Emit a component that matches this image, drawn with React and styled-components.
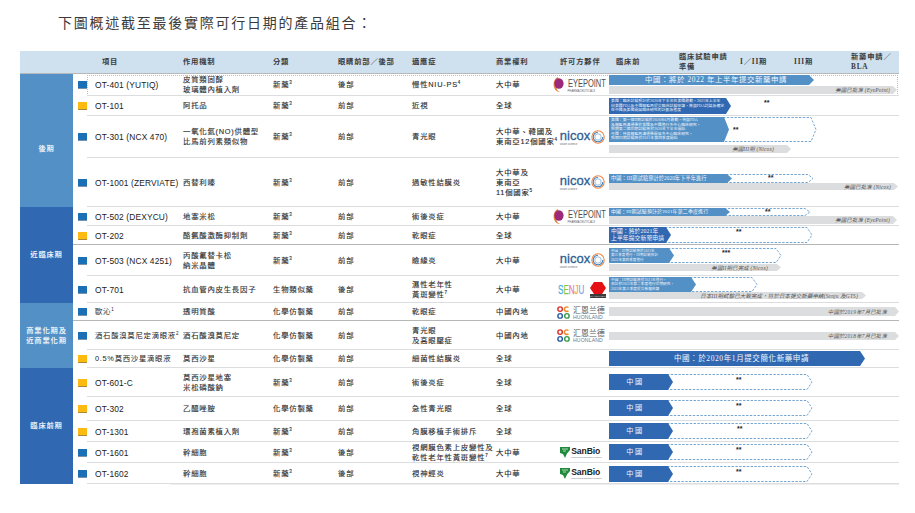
import React from "react";
import styled, { createGlobalStyle } from "styled-components";

const MID = "#5390c6";
const DARK = "#3068b2";
const GRAY = "#dcddde";
const COLS = "22px 88px 90px 65px 74px 84px 57px 56px 290px";
const COLON = "\uFF1A";
const COMMA = "\uFF0C";
const SLASH = "\uFF0F";

const Global = createGlobalStyle`
  html, body { margin: 0; padding: 0; background: #fff; }
  body { font-family: "Liberation Sans", "Noto Sans CJK TC", sans-serif; color: #333; }
`;

const Page = styled.div`
  width: 915px;
  height: 513px;
  overflow: hidden;
  padding: 12px 0 0 20px;
  box-sizing: border-box;
`;
const Title = styled.h1`
  margin: 0 0 0 38px;
  height: 39px;
  font-family: "Noto Sans CJK TC", sans-serif;
  font-size: 14px;
  line-height: 21px;
  font-weight: 400;
  letter-spacing: 1.75px;
  color: #3a3a3a;
`;
const Table = styled.div`
  width: 879px;
`;
const Header = styled.div`
  height: 23px;
  box-sizing: border-box;
  display: grid;
  grid-template-columns: 53px ${COLS};
  align-items: center;
  background: #cfe0ef;
  border-bottom: 1px solid #b6b8ba;
  font-family: "Liberation Serif", "Noto Sans CJK TC", serif;
  font-size: 7.3px;
  font-weight: 700;
  letter-spacing: 0.8px;
  line-height: 10px;
  color: #3b3b3b;
`;
const HeadCell = styled.div`
  padding-left: ${({ $pl }) => $pl || 0}px;
  white-space: pre;
`;
const Stages = styled.div`
  display: grid;
  grid-template-columns: 70px 61px 54px 57px 48px;
  align-items: center;
`;
const Group = styled.section`
  display: flex;
`;
const GroupLabel = styled.div`
  flex: 0 0 53px;
  display: flex;
  align-items: center;
  justify-content: center;
  padding-top: ${({ $shift }) => $shift || 0}px;
  box-sizing: border-box;
  background: ${({ $color }) => $color};
  color: #e8f0f8;
  font-size: 7.3px;
  font-weight: 700;
  letter-spacing: 0.8px;
  line-height: 10px;
  text-align: center;
  white-space: pre-line;
`;
const Rows = styled.div`
  flex: 1;
`;
const Row = styled.div`
  position: relative;
  height: ${({ $h }) => $h}px;
  display: grid;
  grid-template-columns: ${COLS};
  align-items: center;
  font-size: 7.4px;
  letter-spacing: 0.75px;
  line-height: 10px;
  &::after {
    content: "";
    position: absolute;
    left: ${({ $strong }) => ($strong ? 0 : 14)}px;
    right: 0;
    bottom: 0;
    height: 1px;
    background: ${({ $strong }) => ($strong ? "#b4b6b8" : "#dcdddf")};
  }
  ${({ $dotted }) =>
    $dotted &&
    `&::before {
      content: "";
      position: absolute;
      left: 14px;
      right: 1px;
      top: 1px;
      bottom: 0;
      border: 1px dotted #e9a6ae;
      z-index: 0;
    }`}
`;
const Marker = styled.span`
  width: 9px;
  height: 7px;
  margin-left: 5px;
  background: ${({ $yellow }) => ($yellow ? "#fdbb12" : "#1a6fb5")};
  border-bottom: 1px solid ${({ $yellow }) => ($yellow ? "#a88a3a" : "#7a93ad")};
`;
const Project = styled.div`
  font-size: ${({ $cjk }) => ($cjk ? 7.4 : 8.4)}px;
  letter-spacing: ${({ $cjk }) => ($cjk ? 0.7 : 0.15)}px;
  color: #222;
  white-space: nowrap;
`;
const Cell = styled.div`
  white-space: pre;
  color: #2c2c2c;
  -webkit-text-stroke: 0.12px #2c2c2c;
`;
const Rights = styled(Cell)`
  color: #1c1c1c;
`;
const Sup = styled.sup`
  font-size: 4.5px;
  line-height: 0;
  letter-spacing: 0;
`;
const LogoCell = styled.div`
  display: flex;
  justify-content: center;
  align-items: center;
  letter-spacing: 0;
`;
const Pipeline = styled.div`
  position: relative;
  z-index: 1;
  align-self: stretch;
  display: flex;
  flex-direction: column;
  padding-top: ${({ $top }) => $top}px;
  box-sizing: border-box;
`;
const Track = styled.div`
  position: relative;
  display: flex;
`;
const Bar = styled.div`
  position: relative;
  z-index: 1;
  flex: none;
  width: ${({ $w }) => $w}px;
  height: ${({ $h }) => $h}px;
  display: flex;
  align-items: center;
  justify-content: ${({ $center }) => ($center ? "center" : "flex-start")};
  padding: 0 ${({ $pr }) => $pr ?? 5}px 0 ${({ $pl }) => $pl ?? 2}px;
  box-sizing: border-box;
  overflow: hidden;
  background: ${({ $color }) => $color};
  clip-path: polygon(0 0, calc(100% - 5px) 0, 100% 50%, calc(100% - 5px) 100%, 0 100%);
  font-family: "Liberation Serif", "Noto Sans CJK TC", serif;
  color: #f2f6fb;
  font-size: ${({ $size }) => $size}px;
  line-height: ${({ $size }) => $size * 1.22}px;
  letter-spacing: ${({ $ls }) => $ls ?? 0.1}px;
  white-space: pre;
`;
const Tail = styled.div`
  position: relative;
  margin-left: -6px;
  flex: none;
  width: ${({ $w }) => $w}px;
  height: ${({ $h }) => $h}px;
`;
const Stars = styled.span`
  position: absolute;
  top: ${({ $y }) => $y || 0}px;
  left: ${({ $x }) => $x}px;
  font-size: 7px;
  line-height: 7px;
  font-weight: 700;
  letter-spacing: 0;
  color: #222;
`;
const Approved = styled.div`
  width: ${({ $w }) => $w}px;
  height: ${({ $h }) => $h}px;
  margin-top: ${({ $gap }) => $gap || 0}px;
  display: flex;
  align-items: center;
  justify-content: flex-end;
  padding-right: ${({ $pr }) => $pr}px;
  box-sizing: border-box;
  background: ${GRAY};
  clip-path: polygon(0 0, calc(100% - 4px) 0, 100% 50%, calc(100% - 4px) 100%, 0 100%);
  font-family: "Liberation Serif", "Noto Sans CJK TC", serif;
  font-style: italic;
  font-size: 5.4px;
  letter-spacing: 0.2px;
  color: #555;
  white-space: nowrap;
`;
const TableEnd = styled.div`
  margin: 0 0 0 150px;
  width: 729px;
  height: 1px;
  background: #eeeeee;
`;

const LogoBox = styled.div`
  display: flex;
  align-items: center;
  gap: ${({ $gap }) => $gap || 0}px;
  margin-left: ${({ $ml }) => $ml || 0}px;
`;
const Stack = styled.div`
  display: flex;
  flex-direction: column;
`;
const EyeWord = styled.span`
  display: block;
  width: 42px;
  font-size: 11px;
  line-height: 13px;
  color: #4b4f54;
  white-space: nowrap;
  transform: scaleX(0.68);
  transform-origin: left center;
`;
const Tiny = styled.span`
  font-size: ${({ $size }) => $size || 3}px;
  line-height: ${({ $size }) => ($size || 3) + 1}px;
  color: #666;
  white-space: nowrap;
  letter-spacing: 0;
`;
const NicoxWord = styled.span`
  font-size: 13px;
  line-height: 15px;
  color: #2c5d92;
  -webkit-text-stroke: 0.3px #2c5d92;
`;
const SenjuWord = styled.span`
  display: block;
  width: 27px;
  font-size: 13px;
  line-height: 15px;
  white-space: nowrap;
  transform: scaleX(0.62);
  transform-origin: left center;
  -webkit-text-stroke: 0.25px currentColor;
`;
const Letter = styled.span`
  color: ${({ $c }) => $c};
`;
const HuonCn = styled.span`
  font-family: "Noto Sans CJK SC", sans-serif;
  font-size: 7.8px;
  line-height: 9px;
  color: #555;
  letter-spacing: 0.2px;
  white-space: nowrap;
`;
const HuonEn = styled.span`
  font-size: 5.2px;
  line-height: 6px;
  color: #777;
  letter-spacing: 0.1px;
`;
const SanWord = styled.span`
  font-size: 8.6px;
  line-height: 9px;
  font-weight: 700;
  color: #222;
  letter-spacing: -0.1px;
`;
const SenjuTag = styled.span`
  width: 16px;
  height: 4px;
  background: #3b3b3b;
  color: #ddd;
  font-size: 2px;
  line-height: 4px;
  text-align: center;
  white-space: nowrap;
  overflow: hidden;
`;

const EyePoint = () => (
  <LogoBox $gap={4}>
    <svg width="11" height="15" viewBox="0 0 11 15">
      <path d="M5 0C1 2 0 6 1 10s4 5 6 5c-3-1-4-3-3-6S6 3 5 0Z" fill="#e2803a" />
      <ellipse cx="6" cy="6.5" rx="4.6" ry="5.2" fill="#9c2a7c" />
    </svg>
    <Stack>
      <EyeWord>EYEPOINT</EyeWord>
      <Tiny $size={2.8}>PHARMACEUTICALS</Tiny>
    </Stack>
  </LogoBox>
);

const Nicox = () => (
  <LogoBox $gap={1} $ml={3}>
    <Stack>
      <NicoxWord>nicox</NicoxWord>
      <Tiny $size={2.8}>vision science</Tiny>
    </Stack>
    <svg width="14" height="14" viewBox="0 0 14 14" fill="none">
      <circle cx="7" cy="7" r="6.2" stroke="#ee8748" strokeWidth="1.1" />
      <path d="M7 2.2a4.8 4.8 0 1 0 4.8 4.8" stroke="#3f7fb8" strokeWidth="1.1" />
      <circle cx="7" cy="7" r="3.2" stroke="#8fb3d6" strokeWidth="0.9" />
    </svg>
  </LogoBox>
);

const Senju = () => (
  <LogoBox $gap={5} $ml={2}>
    <SenjuWord>
      <Letter $c="#3fb0df">S</Letter>
      <Letter $c="#8cc63f">E</Letter>
      <Letter $c="#ea78ae">N</Letter>
      <Letter $c="#f3a93c">J</Letter>
      <Letter $c="#7f9fe0">U</Letter>
    </SenjuWord>
    <Stack>
      <svg width="16" height="12" viewBox="0 0 16 12">
        <polygon points="4,0 12,0 16,6 12,12 4,12 0,6" fill="#e60f14" />
      </svg>
      <SenjuTag>DIV YOSHI SEIKI</SenjuTag>
    </Stack>
  </LogoBox>
);

const Huonland = () => (
  <LogoBox $gap={3}>
    <svg width="13" height="13" viewBox="0 0 15 15" fill="none" strokeWidth="1.7">
      <circle cx="3.6" cy="3.6" r="2.6" stroke="#d8342b" />
      <path d="M13.2 1.8a2.7 2.7 0 1 0 0 3.8" stroke="#ee8a25" />
      <circle cx="3.6" cy="11.4" r="2.6" stroke="#2a5da8" />
      <circle cx="11.4" cy="11.4" r="2.6" stroke="#3a9a4a" />
    </svg>
    <Stack>
      <HuonCn>汇恩兰德</HuonCn>
      <HuonEn>HUONLAND</HuonEn>
    </Stack>
  </LogoBox>
);

const SanBio = () => (
  <LogoBox $gap={1}>
    <svg width="10" height="11" viewBox="0 0 10 11">
      <polygon points="0,0 10,0 10,3 7,6.5 5,11 3,7 0,6" fill="#1f8a3c" />
      <path d="M2 2h6M3 4h3" stroke="#d8efd8" strokeWidth="0.8" />
    </svg>
    <Stack>
      <SanWord>SanBio</SanWord>
      <Tiny $size={2}>Pioneering Regenerative Medicine</Tiny>
    </Stack>
  </LogoBox>
);

const logos = { eye: EyePoint, nicox: Nicox, senju: Senju, huon: Huonland, san: SanBio };

const DashedTail = ({ w, h, stars, starsX, starsY }) => (
  <Tail $w={w} $h={h}>
    <svg width={w} height={h} viewBox={`0 0 ${w} ${h}`} fill="none">
      <path
        d={`M0 .5H${w - 6}L${w - 1} ${h / 2}L${w - 6} ${h - 0.5}H0`}
        stroke={MID}
        strokeWidth="0.8"
        strokeDasharray="2.4 1.4"
      />
    </svg>
    {stars && (
      <Stars $x={starsX} $y={starsY}>
        {stars}
      </Stars>
    )}
  </Tail>
);

const ROWS_DATA = [
  {
    label: "後期", color: MID, shift: 16,
    rows: [
      { h: 22, dotted: true, name: "OT-401 (YUTIQ)", mech: "皮質類固醇\n玻璃體內植入劑", kind: "新藥", pos: "後部", ind: <>慢性NIU-PS<Sup>4</Sup></>, rights: "大中華", logo: "eye", top: 1,
        bar: { w: 205, h: 10, color: MID, size: 7.4, ls: 0.6, center: true, pl: 14, text: `中國${COLON}將於 2022 年上半年提交新藥申請` },
        approved: { w: 288, h: 8, gap: 1, pr: 7, text: "美國已批准 (EyePoint)" } },
      { h: 20, yellow: true, name: "OT-101", mech: "阿托品", kind: "新藥", pos: "前部", ind: "近視", rights: "全球", top: 2, loneStars: 155,
        bar: { w: 122, h: 16, color: DARK, size: 3.8, text: `美國${COLON}臨床試驗預計於2020年下半年在美國啟動${COMMA}2021年上半年\n向美國FDA及中國藥監局提交臨床試驗申請${COMMA}將與FDA討論及確定\n在中國及美國開展臨床研究的計劃及進度` } },
      { h: 42, name: "OT-301 (NCX 470)", mech: "一氧化氮(NO)供體型\n比馬前列素類似物", kind: "新藥", pos: "前部", ind: "青光眼", rights: "大中華、韓國及\n東南亞12個國家", rightsSup: "4", logo: "nicox", top: 1,
        bar: { w: 120, h: 25, color: MID, size: 3.8, text: `美國${COLON}第一個II期試驗於2020年6月啟動${COMMA}待與FDA\n及藥監局溝通後於美國及中國進行多中心臨床研究${COMMA}\n預期第二個III期試驗將於2020年下半年開始\n中國${COLON}待與藥監局溝通後開展多中心臨床研究${COMMA}\n預期III期試驗將於2021年第四季度開始` },
        tail: { w: 94, starsX: 10, starsY: 9, stars: "**" },
        approved: { w: 182, h: 8, gap: 3, pr: 17, text: "美國III期 (Nicox)" } },
      { h: 49, name: "OT-1001 (ZERVIATE)", mech: "西替利嗪", kind: "新藥", pos: "前部", ind: "過敏性結膜炎", rights: "大中華及\n東南亞\n11個國家", rightsSup: "5", logo: "nicox", top: 16,
        bar: { w: 123, h: 9, color: MID, size: 5.2, ls: 0.1, text: `中國${COLON}III期試驗預計於2020年下半年進行` },
        tail: { w: 88, starsX: 42, stars: "**" },
        approved: { w: 289, h: 7, pr: 7, text: "美國已批准 (Nicox)" } },
    ],
  },
  {
    label: "近臨床期", color: DARK,
    rows: [
      { h: 19, name: "OT-502 (DEXYCU)", mech: "地塞米松", kind: "新藥", pos: "前部", ind: "術後炎症", rights: "大中華", logo: "eye", top: 1,
        bar: { w: 121, h: 8, color: MID, size: 5, text: `中國${COLON}III期試驗預計於2021年第二季度進行` },
        tail: { w: 87, starsX: 41, stars: "**" },
        approved: { w: 288, h: 8, pr: 7, text: "美國已批准 (EyePoint)" } },
      { h: 19, yellow: true, strong: true, name: "OT-202", mech: "酪氨酸激酶抑制劑", kind: "新藥", pos: "前部", ind: "乾眼症", rights: "全球", top: 1,
        bar: { w: 62, h: 16, color: DARK, size: 5.8, text: `中國${COLON}將於2021年\n上半年提交新藥申請` },
        tail: { w: 148, starsX: 71, starsY: 1, stars: "**" } },
      { h: 31, name: "OT-503 (NCX 4251)", mech: "丙酸氟替卡松\n納米晶體", kind: "新藥", pos: "前部", ind: "瞼緣炎", rights: "大中華", logo: "nicox", top: 3,
        bar: { w: 65, h: 15, color: MID, size: 3.5, text: `中國${COLON}III期試驗將於2021年\n第三季度進行${COMMA}III期試驗預計\n2022年第四季度進行` },
        tail: { w: 114, starsX: 54, starsY: 1, stars: "***" },
        approved: { w: 172, h: 7, gap: 1, pr: 13, text: "美國II期已完成 (Nicox)" } },
      { h: 27, name: "OT-701", mech: "抗血管內皮生長因子", kind: "生物類似藥", pos: "後部", ind: <>濕性老年性{"\n"}黃斑變性<Sup>7</Sup></>, rights: "大中華", logo: "senju", top: 1,
        bar: { w: 87, h: 15, color: MID, size: 3.6, text: `中國${COLON}III期試驗將於2021年進行${COMMA}\n預計於2022年第二季度進行III期研究${COMMA}\n2023年第三季度提交新藥申請` },
        tail: { w: 68 },
        approved: { w: 257, h: 7, pr: 8, text: `日本III期試驗已大致完成${COMMA}待於日本提交新藥申請(Senju 及GTS)` } },
    ],
  },
  {
    label: "商業化期及\n近商業化期", color: MID,
    rows: [
      { h: 18, strong: true, cjk: true, name: <>歐沁<Sup>1</Sup></>, mech: "透明質酸", kind: "化學仿製藥", pos: "前部", ind: "乾眼症", rights: "中國內地", logo: "huon", top: 4,
        approved: { w: 290, h: 9, pr: 12, text: "中國於2019年7月已批准" } },
      { h: 29, cjk: true, name: <>酒石酸溴莫尼定滴眼液<Sup>2</Sup></>, mech: "酒石酸溴莫尼定", kind: "化學仿製藥", pos: "前部", ind: "青光眼\n及高眼壓症", rights: "中國內地", logo: "huon", top: 11,
        approved: { w: 290, h: 8, pr: 12, text: "中國於2018年7月已批准" } },
      { h: 18, yellow: true, cjk: true, name: "0.5%莫西沙星滴眼液", mech: "莫西沙星", kind: "化學仿製藥", pos: "前部", ind: "細菌性結膜炎", rights: "全球", top: 1,
        bar: { w: 256, h: 15, color: DARK, size: 7.5, ls: 0.6, center: true, pl: 14, text: `中國${COLON}於2020年1月提交簡化新藥申請` } },
    ],
  },
  {
    label: "臨床前期", color: DARK,
    rows: [
      { h: 29, yellow: true, name: "OT-601-C", mech: "莫西沙星地塞\n米松磷酸鈉", kind: "新藥", pos: "前部", ind: "術後炎症", rights: "全球", top: 6, china: true, starsX: 69 },
      { h: 24, yellow: true, name: "OT-302", mech: "乙醯唑胺", kind: "化學仿製藥", pos: "前部", ind: "急性青光眼", rights: "全球", top: 3, china: true, starsX: 69 },
      { h: 21, yellow: true, name: "OT-1301", mech: "環孢菌素植入劑", kind: "新藥", pos: "前部", ind: "角膜移植手術排斥", rights: "全球", top: 2, china: true, starsX: 70 },
      { h: 21, name: "OT-1601", mech: "幹細胞", kind: "新藥", pos: "後部", ind: <>視網膜色素上皮變性及{"\n"}乾性老年性黃斑變性<Sup>7</Sup></>, rights: "大中華", logo: "san", top: 2, china: true, starsX: 69 },
      { h: 21, name: "OT-1602", mech: "幹細胞", kind: "新藥", pos: "後部", ind: "視神經炎", rights: "大中華", logo: "san", top: 3, china: true, starsX: 69 },
    ],
  },
];

const TableRow = ({ row }) => {
  const Logo = row.logo && logos[row.logo];
  const bar = row.china
    ? { w: 64, h: 16, color: DARK, size: 7.2, ls: 1.6, center: true, pl: 0, pr: 12, text: "中國" }
    : row.bar;
  const tail = row.china ? { w: 146, starsX: row.starsX, starsY: 2, stars: "**" } : row.tail;
  return (
    <Row $h={row.h} $strong={row.strong} $dotted={row.dotted}>
      <Marker $yellow={row.yellow} />
      <Project $cjk={row.cjk}>{row.name}</Project>
      <Cell>{row.mech}</Cell>
      <Cell>
        {row.kind}
        {row.kind === "新藥" && <Sup>3</Sup>}
      </Cell>
      <Cell>{row.pos}</Cell>
      <Cell>{row.ind}</Cell>
      <Rights>
        {row.rights}
        {row.rightsSup && <Sup>{row.rightsSup}</Sup>}
      </Rights>
      <LogoCell>{Logo && <Logo />}</LogoCell>
      <Pipeline $top={row.top}>
        {bar && (
          <Track>
            <Bar
              $w={bar.w}
              $h={bar.h}
              $color={bar.color}
              $size={bar.size}
              $ls={bar.ls}
              $center={bar.center}
              $pl={bar.pl}
              $pr={bar.pr}
            >
              {bar.text}
            </Bar>
            {tail && <DashedTail w={tail.w} h={bar.h} stars={tail.stars} starsX={tail.starsX} starsY={tail.starsY} />}
            {row.loneStars && <Stars $x={row.loneStars} $y={1}>**</Stars>}
          </Track>
        )}
        {row.approved && (
          <Approved
            $w={row.approved.w}
            $h={row.approved.h}
            $gap={row.approved.gap}
            $pr={row.approved.pr}
          >
            {row.approved.text}
          </Approved>
        )}
      </Pipeline>
    </Row>
  );
};

const App = () => (
  <Page>
    <Global />
    <Title>下圖概述截至最後實際可行日期的產品組合{COLON}</Title>
    <Table>
      <Header>
        <span />
        <span />
        <HeadCell $pl={7}>項目</HeadCell>
        <HeadCell>作用機制</HeadCell>
        <HeadCell>分類</HeadCell>
        <HeadCell>眼睛前部{SLASH}後部</HeadCell>
        <HeadCell>適應症</HeadCell>
        <HeadCell>商業權利</HeadCell>
        <HeadCell $pl={7}>許可方夥伴</HeadCell>
        <Stages>
          <HeadCell $pl={7}>臨床前</HeadCell>
          <HeadCell>{"臨床試驗申請\n準備"}</HeadCell>
          <HeadCell>I{SLASH}II期</HeadCell>
          <HeadCell>III期</HeadCell>
          <HeadCell>{`新藥申請${SLASH}\nBLA`}</HeadCell>
        </Stages>
      </Header>
      {ROWS_DATA.map((group) => (
        <Group key={group.label}>
          <GroupLabel $color={group.color} $shift={group.shift}>
            {group.label}
          </GroupLabel>
          <Rows>
            {group.rows.map((row, i) => (
              <TableRow key={i} row={row} />
            ))}
          </Rows>
        </Group>
      ))}
      <TableEnd />
    </Table>
  </Page>
);

export default App;
